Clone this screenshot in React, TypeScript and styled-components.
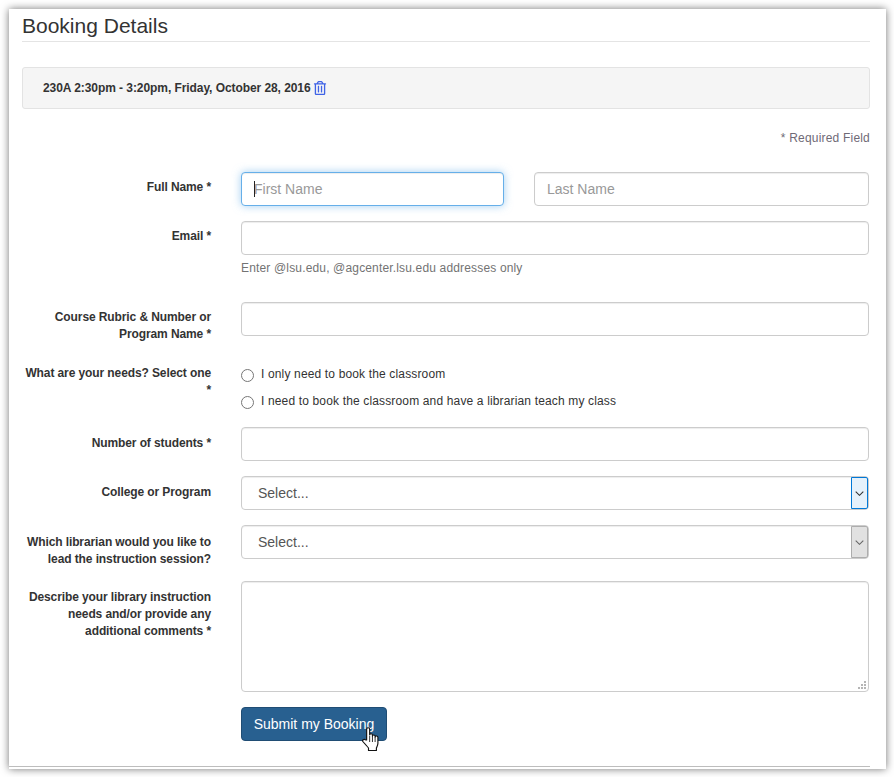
import React from 'react';
import styled, { createGlobalStyle } from 'styled-components';
import { FaRegTrashAlt } from 'react-icons/fa';

const GlobalStyle = createGlobalStyle`
  html, body {
    margin: 0;
    background: #fff;
    font-family: "Liberation Sans", Arial, sans-serif;
    color: #333;
  }
  * {
    box-sizing: border-box;
  }
`;

const Page = styled.div`
  padding: 9px 8px 0 9px;
  height: 777px;
  overflow: hidden;
`;

const Panel = styled.main`
  height: 760px;
  padding: 0 16px 0 13px;
  background: #fff;
  box-shadow: 0 0 8px rgba(0, 0, 0, 0.55);
  position: relative;
`;

const Heading = styled.h3`
  margin: 0;
  height: 33px;
  padding-top: 4px;
  font-size: 21px;
  font-weight: 400;
  line-height: 26px;
  border-bottom: 1px solid #e4e4e4;
`;

const Well = styled.div`
  display: flex;
  align-items: center;
  gap: 2px;
  height: 42px;
  margin-top: 25px;
  padding: 0 20px;
  font-size: 12px;
  font-weight: 700;
  letter-spacing: -0.07px;
  background: #f5f5f5;
  border: 1px solid #e3e3e3;
  border-radius: 3px;
`;

const TrashButton = styled.span`
  display: inline-flex;
  color: #3f63e6;
  font-size: 14px;
`;

const RequiredNote = styled.p`
  margin: 22px 0 0;
  font-size: 12px;
  line-height: 14px;
  letter-spacing: 0.2px;
  text-align: right;
  color: #6f6a76;
`;

const Form = styled.form`
  display: flex;
  flex-direction: column;
  margin-top: 27px;
`;

const Row = styled.div<{ $after: number }>`
  display: grid;
  grid-template-columns: 189px 628px;
  column-gap: 30px;
  margin-bottom: ${({ $after }) => $after}px;
`;

const Label = styled.label<{ $top?: number }>`
  padding-top: ${({ $top }) => $top ?? 8}px;
  font-size: 12px;
  font-weight: 700;
  line-height: 17px;
  letter-spacing: -0.1px;
  text-align: right;
`;

const NamePair = styled.div`
  display: grid;
  grid-template-columns: 263px 335px;
  column-gap: 30px;
`;

const FieldWrap = styled.div`
  position: relative;
`;

const Input = styled.input<{ $focused?: boolean }>`
  display: block;
  width: 100%;
  height: 34px;
  padding: 0 12px;
  font: 14px "Liberation Sans", Arial, sans-serif;
  color: #555;
  background: #fff;
  border: 1px solid ${({ $focused }) => ($focused ? '#66afe9' : '#ccc')};
  border-radius: 4px;
  outline: none;
  box-shadow: ${({ $focused }) =>
    $focused
      ? 'inset 0 1px 1px rgba(0,0,0,.075), 0 0 8px rgba(102,175,233,.6)'
      : 'inset 0 1px 1px rgba(0,0,0,.075)'};

  &::placeholder {
    color: #999;
    opacity: 1;
  }
`;

const Caret = styled.span`
  position: absolute;
  left: 13px;
  top: 9px;
  width: 1px;
  height: 16px;
  background: #222;
`;

const Help = styled.p`
  margin: 6px 0 0;
  font-size: 12px;
  line-height: 14px;
  letter-spacing: 0.16px;
  color: #737373;
`;

const RadioGroup = styled.div`
  display: flex;
  flex-direction: column;
  gap: 10px;
  padding-top: 2px;
`;

const RadioRow = styled.label`
  display: flex;
  align-items: center;
  gap: 7px;
  height: 17px;
  font-size: 12px;
  letter-spacing: 0.15px;
  color: #333;
`;

const Radio = styled.input`
  width: 13px;
  height: 13px;
  margin: 3px 0 0;
  flex: none;
`;

const SelectBox = styled.div`
  display: flex;
  align-items: stretch;
  height: 34px;
  background: #fff;
  border: 1px solid #ccc;
  border-radius: 4px;
  box-shadow: inset 0 1px 1px rgba(0, 0, 0, 0.075);
`;

const SelectValue = styled.span`
  flex: 1;
  padding-left: 16px;
  font-size: 14px;
  line-height: 32px;
  color: #555;
`;

const SelectArrow = styled.span<{ $active?: boolean }>`
  display: flex;
  align-items: center;
  justify-content: center;
  width: 17px;
  color: ${({ $active }) => ($active ? '#333' : '#666')};
  background: ${({ $active }) => ($active ? '#e5f1fb' : '#e1e1e1')};
  border: 1px solid ${({ $active }) => ($active ? '#0078d7' : '#adadad')};
  border-radius: 0 2px 2px 0;
`;

const TextareaWrap = styled.div`
  position: relative;
`;

const Textarea = styled.textarea`
  display: block;
  width: 100%;
  height: 111px;
  padding: 6px 12px;
  font: 14px "Liberation Sans", Arial, sans-serif;
  border: 1px solid #ccc;
  border-radius: 4px;
  outline: none;
  resize: none;
  box-shadow: inset 0 1px 1px rgba(0, 0, 0, 0.075);
`;

const ResizeGrip = styled.svg`
  position: absolute;
  right: 3px;
  bottom: 3px;
  width: 8px;
  height: 8px;
`;

const SubmitWrap = styled.div`
  position: relative;
  width: 146px;
`;

const SubmitButton = styled.button`
  display: block;
  width: 146px;
  height: 34px;
  padding: 0;
  font: 14px "Liberation Sans", Arial, sans-serif;
  color: #fff;
  background: #286090;
  border: 1px solid #204d74;
  border-radius: 4px;
`;

const HandCursor = styled.svg`
  position: absolute;
  left: 121px;
  top: 20px;
  width: 18px;
  height: 25px;
`;

const BottomRule = styled.div`
  position: absolute;
  left: 0;
  right: 16px;
  bottom: 2px;
  height: 1px;
  background: #bdbdbd;
`;

const Chevron = () => (
  <svg width="9" height="5" viewBox="0 0 9 5" fill="none" stroke="currentColor" strokeWidth="1.1">
    <path d="M.7.7l3.8 3.6L8.3.7" />
  </svg>
);

const App = () => {
  return (
    <Page>
      <GlobalStyle />
      <Panel>
        <Heading>Booking Details</Heading>
        <Well>
          230A 2:30pm - 3:20pm, Friday, October 28, 2016
          <TrashButton>
            <FaRegTrashAlt />
          </TrashButton>
        </Well>
        <RequiredNote>* Required Field</RequiredNote>
        <Form>
          <Row $after={15}>
            <Label $top={7}>Full Name *</Label>
            <NamePair>
              <FieldWrap>
                <Input placeholder="First Name" $focused />
                <Caret />
              </FieldWrap>
              <Input placeholder="Last Name" />
            </NamePair>
          </Row>
          <Row $after={27}>
            <Label $top={7}>Email *</Label>
            <div>
              <Input />
              <Help>Enter @lsu.edu, @agcenter.lsu.edu addresses only</Help>
            </div>
          </Row>
          <Row $after={20}>
            <Label $top={7}>Course Rubric &amp; Number or Program Name *</Label>
            <Input />
          </Row>
          <Row $after={18}>
            <Label $top={2}>What are your needs? Select one *</Label>
            <RadioGroup>
              <RadioRow>
                <Radio type="radio" name="needs" />I only need to book the classroom
              </RadioRow>
              <RadioRow>
                <Radio type="radio" name="needs" />I need to book the classroom and have a librarian teach my class
              </RadioRow>
            </RadioGroup>
          </Row>
          <Row $after={15}>
            <Label $top={8}>Number of students *</Label>
            <Input />
          </Row>
          <Row $after={15}>
            <Label $top={8}>College or Program</Label>
            <SelectBox>
              <SelectValue>Select...</SelectValue>
              <SelectArrow $active>
                <Chevron />
              </SelectArrow>
            </SelectBox>
          </Row>
          <Row $after={13}>
            <Label $top={9}>Which librarian would you like to lead the instruction session?</Label>
            <SelectBox>
              <SelectValue>Select...</SelectValue>
              <SelectArrow>
                <Chevron />
              </SelectArrow>
            </SelectBox>
          </Row>
          <Row $after={15}>
            <Label $top={8}>Describe your library instruction needs and/or provide any additional comments *</Label>
            <TextareaWrap>
              <Textarea />
              <ResizeGrip viewBox="0 0 8 8" fill="#b5b5b5">
                <rect x="6" y="0" width="2" height="2" />
                <rect x="3" y="3" width="2" height="2" />
                <rect x="6" y="3" width="2" height="2" />
                <rect x="0" y="6" width="2" height="2" />
                <rect x="3" y="6" width="2" height="2" />
                <rect x="6" y="6" width="2" height="2" />
              </ResizeGrip>
            </TextareaWrap>
          </Row>
          <Row $after={0}>
            <span />
            <SubmitWrap>
              <SubmitButton type="button">Submit my Booking</SubmitButton>
              <HandCursor viewBox="1 0 15.5 25" preserveAspectRatio="none">
                <path
                  d="M5 13V2.2c0-2 2.6-2 2.6 0V8c0-1.6 2.4-1.6 2.4 0v1c0-1.5 2.3-1.5 2.3 0v1c0-1.4 2.4-1.3 2.4.3v6c0 2-.7 3.3-1.3 4.7v2.4H6.6V21c-1.3-1.8-3-4-4.7-6.2-1.2-1.7.9-3.2 2.2-1.8z"
                  fill="#fff"
                  stroke="#111"
                  strokeWidth="1"
                  strokeLinejoin="round"
                />
                <path d="M7.6 9v6M10 9v6M12.3 10v5" stroke="#111" strokeWidth="0.8" />
              </HandCursor>
            </SubmitWrap>
          </Row>
        </Form>
        <BottomRule />
      </Panel>
    </Page>
  );
};

export default App;
